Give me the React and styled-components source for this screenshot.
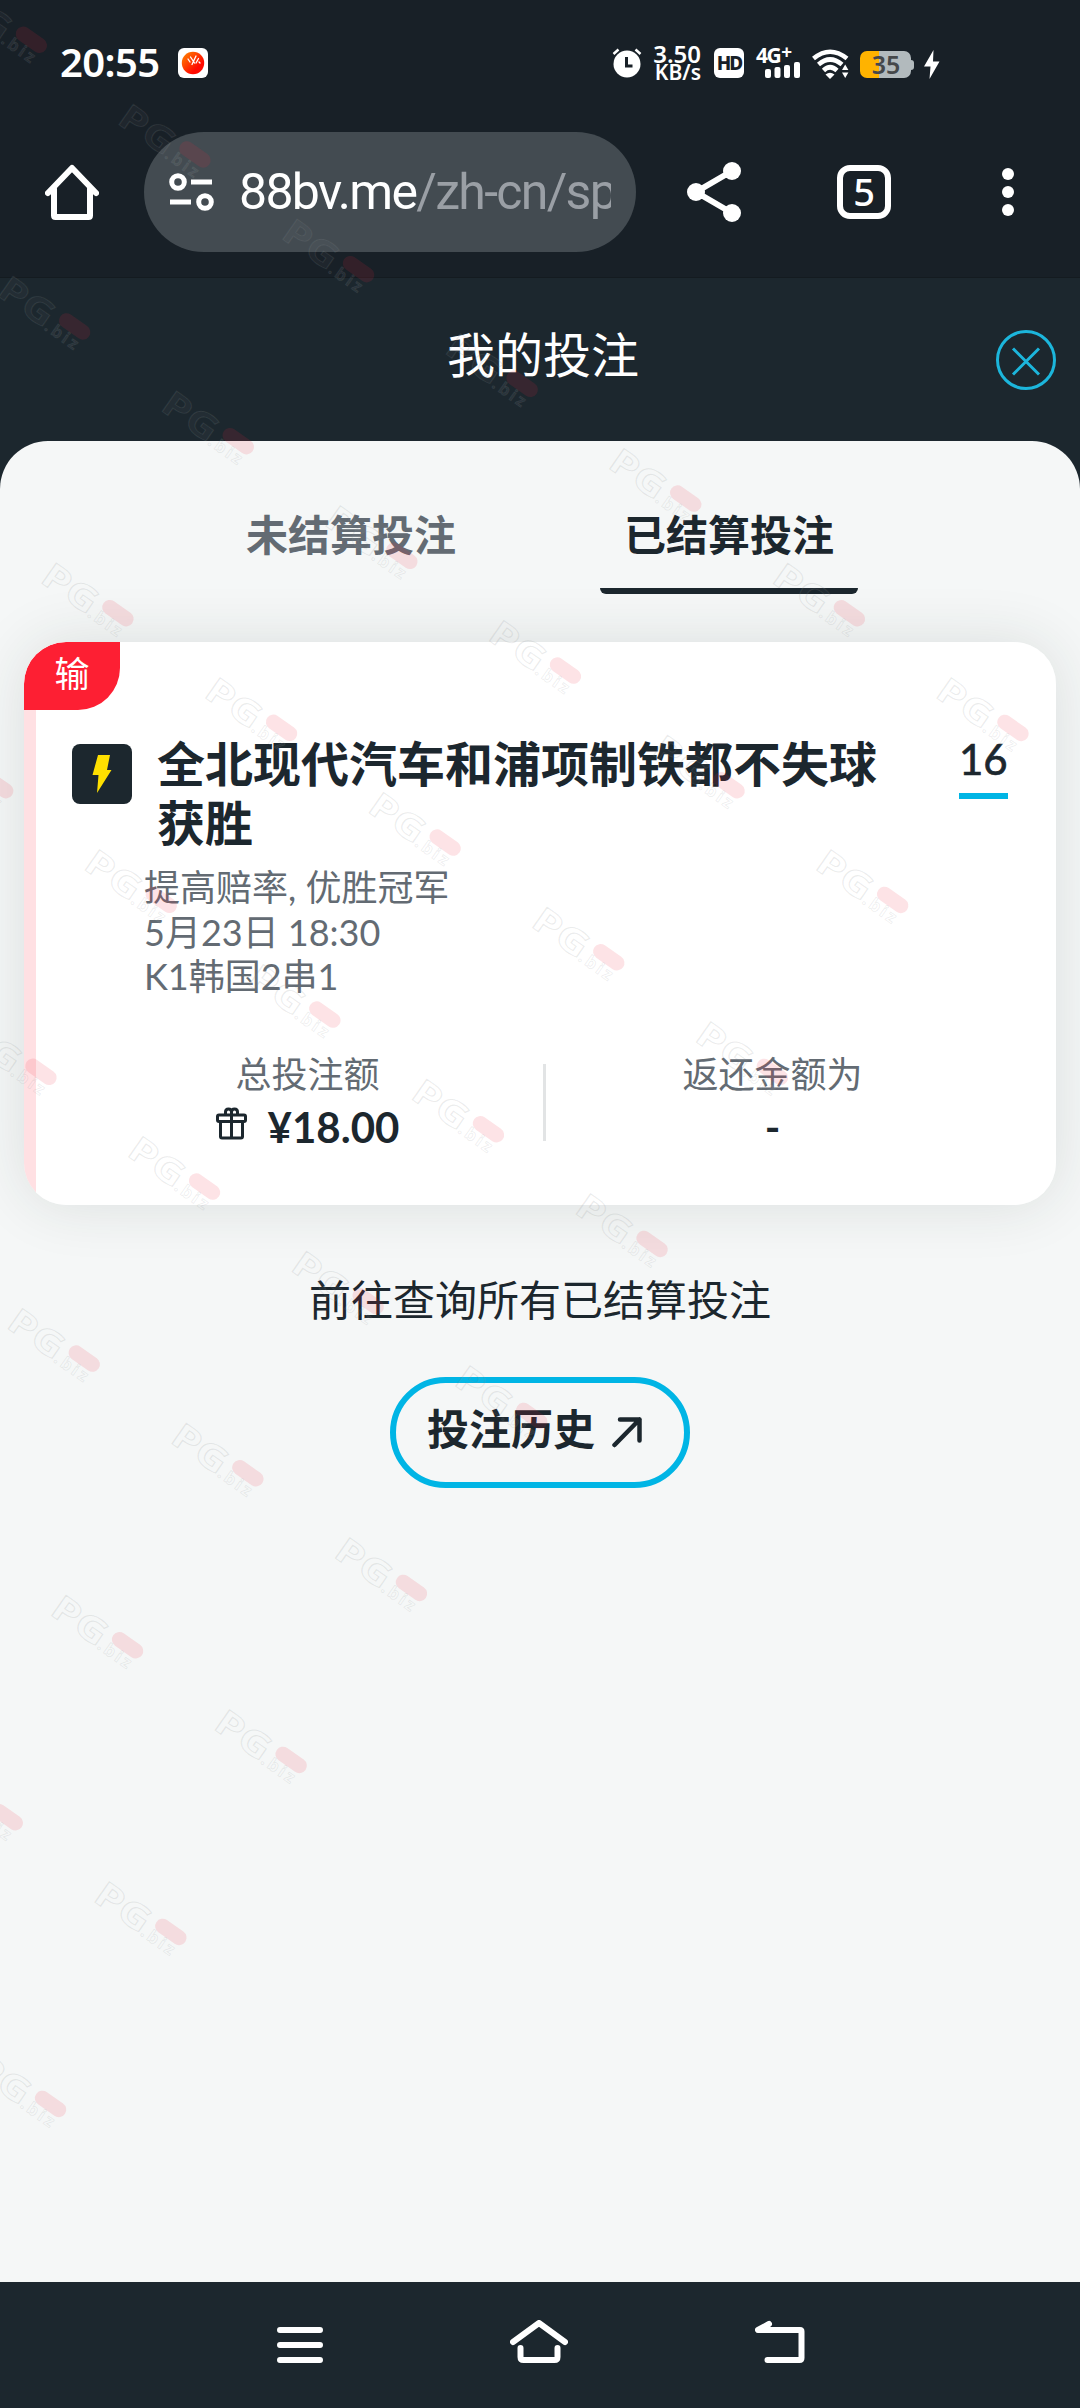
import styled, { createGlobalStyle } from "styled-components"

const tabs = [
    { label: "未结算投注", active: false },
    { label: "已结算投注", active: true },
]

const details = ["提高赔率, 优胜冠军", "5月23日 18:30", "K1韩国2串1"]

// rows of the watermark lattice: [row, first column, last column]
const markRows = [
    [0, -1, 5], [1, -1, 4], [2, -1, 3], [3, -2, 2], [4, -2, 1],
    [5, -2, 0], [6, -2, -1], [7, -3, -2], [8, -3, -3],
]
const marks = markRows.flatMap(([row, from, to]) =>
    Array.from({ length: to - from + 1 }, (_, k) => {
        const col = from + k
        return { x: 115.4 + col * 163.6 + row * 43.3, y: 104 + col * 114.7 + row * 286.7 }
    })
)

function Watermark() {
    return (
        <MarkLayer viewBox="0 0 1080 2408">
            {marks.map(({ x, y }) => (
                <g key={`${x}-${y}`} transform={`translate(${x} ${y}) rotate(35)`}>
                    <MarkLetters x="11" y="15" textLength="60" lengthAdjust="spacingAndGlyphs">PG</MarkLetters>
                    <rect x="76.600" y="-11.800" width="35" height="15" rx="7.500" fill="#f0283c" fillOpacity="0.13" />
                    <MarkSuffix x="70" y="16" textLength="37">.biz</MarkSuffix>
                </g>
            ))}
        </MarkLayer>
    )
}

export default function App() {
    return (
        <Page>
            <Global />
            <StatusBar>
                <Clock>20:55</Clock>
                <svg width="30" height="30" viewBox="0 0 30 30">
                    <defs>
                        <linearGradient id="app" x1="0" y1="0" x2="1" y2="1">
                            <stop offset="0" stopColor="#ff8a00" />
                            <stop offset="0.7" stopColor="#ff0a00" />
                        </linearGradient>
                    </defs>
                    <rect width="30" height="30" rx="6" fill="#fff" />
                    <circle cx="15" cy="15" r="11.2" fill="url(#app)" />
                    <path d="M10 11l2 3M12.500 9l4 6M18 8l-4 8.500M20.500 10.500l-2.500 4.500M21 14l1 1" stroke="#fff" strokeWidth="1.3" strokeLinecap="round" />
                </svg>
                <StatusIcons>
                    <svg width="30" height="30" viewBox="0 0 30 30">
                        <circle cx="15" cy="16" r="13.500" fill="#fff" />
                        <path d="M1.500 6l5-4.500M28.500 6l-5-4.500" stroke="#fff" strokeWidth="2.500" />
                        <path d="M14.500 9v9h6" stroke="#182027" strokeWidth="3" fill="none" />
                    </svg>
                    <Speed><span>3.50</span><small>KB/s</small></Speed>
                    <Hd>HD</Hd>
                    <Signal>
                        <b>4G<i>+</i></b>
                        <svg width="35" height="16" viewBox="0 0 35 16" fill="#fff">
                            <rect y="7" width="6" height="9" rx="2" />
                            <rect x="9.500" y="5" width="6" height="11" rx="2" />
                            <rect x="19" y="3" width="6" height="13" rx="2" />
                            <rect x="29" width="6" height="16" rx="2" />
                        </svg>
                    </Signal>
                    <svg width="37" height="30" viewBox="0 0 37 30" fill="none" stroke="#fff" strokeWidth="4.600">
                        <path d="M1.500 9.500Q18 -4 35 9.500" />
                        <path d="M6.500 15.500Q18 5.500 30 15.500" />
                        <path d="M11.500 21.500Q18 15 25 21.500" />
                        <path d="M13.500 25.500Q18 22 22.500 25.500L18 30z" fill="#fff" stroke="none" />
                        <path d="M30 21l3.200-5.500L36.400 21zM30 23.500l3.200 5.500 3.200-5.500z" fill="#fff" stroke="none" />
                    </svg>
                    <Battery><span>35</span></Battery>
                    <svg width="16" height="29" viewBox="0 0 16 29" fill="#fff">
                        <path d="M9.500 0L0 16.500h6.500L5.500 29 15.500 11.500H9z" />
                    </svg>
                </StatusIcons>
            </StatusBar>

            <BrowserBar>
                <svg width="54" height="56" viewBox="0 0 54 56" fill="none" stroke="#fff" strokeWidth="6" strokeLinecap="round" strokeLinejoin="round">
                    <path d="M3 29L27 4l24 25" />
                    <path d="M9 25v26.500q0 1.500 1.500 1.500h33q1.500 0 1.500-1.500V25" />
                </svg>
                <UrlPill>
                    <svg width="46" height="38" viewBox="0 0 46 38" fill="none" stroke="#fff" strokeWidth="5">
                        <circle cx="9" cy="9" r="6.300" />
                        <circle cx="36" cy="29" r="6.300" />
                        <path d="M22 9h21M1 29h21" />
                    </svg>
                    <Url>88bv.me<span>/zh-cn/sp</span></Url>
                </UrlPill>
                <Tools>
                    <svg width="54" height="60" viewBox="0 0 54 60" fill="#fff">
                        <path d="M45 9L9 30l36 21" stroke="#fff" strokeWidth="6" fill="none" />
                        <circle cx="45" cy="9" r="9" />
                        <circle cx="9" cy="30" r="9" />
                        <circle cx="45" cy="51" r="9" />
                    </svg>
                    <TabCount>5</TabCount>
                    <svg width="12" height="48" viewBox="0 0 12 48" fill="#fff">
                        <circle cx="6" cy="6" r="6" />
                        <circle cx="6" cy="24" r="6" />
                        <circle cx="6" cy="42" r="6" />
                    </svg>
                </Tools>
            </BrowserBar>

            <Header>
                <h1>我的投注</h1>
                <svg width="60" height="60" viewBox="0 0 60 60" fill="none" stroke="#1cb6dc" strokeWidth="3">
                    <circle cx="30" cy="30" r="28.500" />
                    <path d="M17 18.500l26 26M43 18.500l-26 26" />
                </svg>
            </Header>

            <Sheet>
                <Tabs>
                    {tabs.map(tab => <Tab key={tab.label} $active={tab.active}>{tab.label}</Tab>)}
                </Tabs>

                <Card>
                    <Result>输</Result>
                    <Bet>
                        <BoltBox>
                            <svg width="20" height="40" viewBox="0 0 20 40">
                                <path d="M6 1h12l-3 15h4.500L5 39l1.500-18H.500z" fill="#ffe000" />
                            </svg>
                        </BoltBox>
                        <BetTitle>全北现代汽车和浦项制铁都不失球获胜</BetTitle>
                        <Odds>16</Odds>
                    </Bet>
                    <Details>
                        {details.map(line => <p key={line}>{line}</p>)}
                    </Details>
                    <Amounts>
                        <Amount $width="471px">
                            <span>总投注额</span>
                            <strong>
                                <svg width="32" height="33" viewBox="0 0 32 33" fill="none" stroke="#1c272e" strokeWidth="3">
                                    <rect x="1.500" y="8" width="28" height="6.500" rx="1.500" />
                                    <path d="M4.500 14.500v15q0 1.500 1.500 1.500h19q1.500 0 1.500-1.500v-15M15.500 7v24" />
                                    <path d="M15.500 8V5Q15.500 2 12.500 2T9.500 5v3M15.500 8V5q0-3 3-3t3 3v3" />
                                </svg>
                                ¥18.00
                            </strong>
                        </Amount>
                        <Divider />
                        <Amount $width="453px">
                            <span>返还金额为</span>
                            <strong>-</strong>
                        </Amount>
                    </Amounts>
                </Card>

                <Hint>前往查询所有已结算投注</Hint>
                <HistoryButton>
                    投注历史
                    <svg width="31" height="32" viewBox="0 0 31 32" fill="none" stroke="#1c272e" strokeWidth="4.500" strokeLinecap="round" strokeLinejoin="round">
                        <path d="M2.500 29L27.500 3.500M8 3.500h19.500v21" />
                    </svg>
                </HistoryButton>
            </Sheet>

            <NavBar>
                <svg width="46" height="44" viewBox="0 0 46 44">
                    <path d="M3 10h40M3 25h40M3 40h40" />
                </svg>
                <svg width="58" height="44" viewBox="0 0 58 44">
                    <path d="M3 22L29 3l26 19M10.500 28v9q0 3 3 3h31q3 0 3-3v-9" />
                </svg>
                <svg width="50" height="44" viewBox="0 0 50 44">
                    <path d="M14 4L3 10h42q1.500 0 1.500 1.500v26.500q0 2-2 2H12.500" />
                </svg>
            </NavBar>
            <Watermark />
        </Page>
    )
}

const Global = createGlobalStyle`
    * { box-sizing: border-box; }
    body, h1, h2, p { margin: 0; }
    svg { display: block; flex: none; }
`;

const Page = styled.div`
    position: relative;
    display: flex;
    flex-direction: column;
    width: 1080px;
    height: 2408px;
    overflow: hidden;
    background: #1c272e;
    color: #1c272e;
    font-family: Lato, "Noto Sans CJK SC", sans-serif;
`;

const StatusBar = styled.div`
    display: flex;
    align-items: center;
    height: 126px;
    padding-left: 60px;
    background: #182027;
    color: #fff;
    font-family: "Noto Sans", sans-serif;
`;

const Clock = styled.div`
    width: 118px;
    font-size: 40px;
    font-weight: 600;
    letter-spacing: -0.6px;
    line-height: 48px;
    padding-bottom: 2px;
`;

const StatusIcons = styled.div`
    display: flex;
    align-items: center;
    margin-left: 404px;

    > :nth-child(2) { margin-left: 11px; }
    > :nth-child(3) { margin-left: 13px; }
    > :nth-child(4) { margin-left: 12px; }
    > :nth-child(5) { margin: 2px 0 0 12px; }
    > :nth-child(6) { margin: 3px 0 0 11px; }
    > :nth-child(7) { margin: 2px 0 0 10px; }
`;

const Speed = styled.div`
    display: flex;
    flex-direction: column;
    align-items: flex-end;
    width: 48px;
    font-size: 24px;
    font-weight: 600;
    line-height: 19px;
    white-space: nowrap;

    small { font-size: 21px; }
`;

const Hd = styled.div`
    width: 30px;
    height: 30px;
    border-radius: 6px;
    background: #fff;
    color: #182027;
    font-size: 19px;
    font-weight: 800;
    letter-spacing: -2px;
    line-height: 30px;
    text-align: center;
`;

const Signal = styled.div`
    display: flex;
    flex-direction: column;
    align-items: flex-end;
    width: 44px;
    height: 30px;

    b {
        display: flex;
        width: 44px;
        height: 14px;
        font-size: 21px;
        letter-spacing: -1.5px;
        line-height: 15px;
        white-space: nowrap;
    }

    i {
        font-size: 19px;
        font-style: normal;
        line-height: 8px;
        margin-left: 1px;
    }
`;

const Battery = styled.div`
    display: flex;
    align-items: center;
    width: 54px;
    color: #45484a;
    font-size: 25px;
    font-weight: 600;
    line-height: 27px;

    span {
        width: 51px;
        height: 27px;
        padding-left: 1px;
        border-radius: 7px;
        background: linear-gradient(90deg, #ffb300 19px, #b2babd 19px);
        text-align: center;
    }

    &::after {
        content: "";
        width: 3px;
        height: 10px;
        border-radius: 0 3px 3px 0;
        background: #b2babd;
    }
`;

const BrowserBar = styled.div`
    display: flex;
    align-items: center;
    height: 152px;
    padding: 0 66px 20px 45px;
    background: #182027;
    border-bottom: 1px solid #141b20;
    color: #fff;
`;

const UrlPill = styled.div`
    display: flex;
    align-items: center;
    width: 492px;
    height: 120px;
    margin-left: 45px;
    padding-left: 25px;
    border-radius: 60px;
    background: #434b51;
`;

const Url = styled.div`
    width: 372px;
    margin-left: 24px;
    overflow: hidden;
    font-family: Roboto, sans-serif;
    font-size: 50px;
    letter-spacing: -1.7px;
    line-height: 64px;
    white-space: nowrap;

    span { color: #9a9fa5; }
`;

const Tools = styled.div`
    display: flex;
    align-items: center;
    margin-left: 51px;

    > :nth-child(2) { margin: 0 111px 0 96px; }
`;

const TabCount = styled.div`
    width: 54px;
    height: 54px;
    border: 6px solid #fff;
    border-radius: 13px;
    font-family: "Noto Sans", sans-serif;
    font-size: 38px;
    font-weight: 500;
    line-height: 41px;
    text-align: center;
`;

const Header = styled.div`
    display: flex;
    align-items: center;
    justify-content: flex-end;
    height: 163px;
    padding-right: 24px;
    color: #fff;

    h1 {
        width: 906px;
        padding-bottom: 9px;
        text-align: center;
        font-size: 48px;
        font-weight: 400;
        line-height: 60px;
    }
`;

const Sheet = styled.div`
    display: flex;
    flex: 1;
    flex-direction: column;
    align-items: center;
    border-radius: 48px 48px 0 0;
    background: #f5f7f7;
`;

const Tabs = styled.div`
    display: flex;
    gap: 120px;
    padding-top: 47px;
`;

const Tab = styled.div`
    width: 258px;
    height: 106px;
    padding-top: 17px;
    overflow: hidden;
    color: ${props => props.$active ? "#1c272e" : "#636b73"};
    font-size: 42px;
    font-weight: 700;
    line-height: 60px;
    text-align: center;

    &::after {
        content: "";
        display: block;
        height: 6px;
        margin-top: 23px;
        border-radius: 0 0 6px 6px;
        background: ${props => props.$active ? "#1c272e" : "transparent"};
    }
`;

const Card = styled.div`
    width: 1032px;
    height: 563px;
    margin-top: 48px;
    overflow: hidden;
    border-radius: 42px;
    background: linear-gradient(90deg, #ffe0e3 12px, #fff 12px);
    box-shadow: 0 0 60px rgba(30, 50, 45, 0.12);
`;

const Result = styled.div`
    width: 96px;
    height: 68px;
    border-radius: 42px 0 42px 0;
    background: #fd1f33;
    color: #fff;
    font-size: 35px;
    line-height: 63px;
    text-align: center;
`;

const Bet = styled.div`
    display: flex;
    align-items: flex-start;
    padding: 24px 48px 0;
`;

const BoltBox = styled.div`
    display: flex;
    align-items: center;
    justify-content: center;
    width: 60px;
    height: 60px;
    margin-top: 10px;
    border-radius: 8px;
    background: #1c272e;
`;

const BetTitle = styled.h2`
    width: 740px;
    margin-left: 25px;
    font-size: 48px;
    font-weight: 700;
    line-height: 59px;
`;

const Odds = styled.div`
    width: 49px;
    margin-left: auto;
    border-bottom: 6px solid #00b5e5;
    font-size: 42px;
    line-height: 50px;
    padding-bottom: 9px;
    -webkit-text-stroke: 0.7px #1c272e;
`;

const Details = styled.div`
    padding: 13px 0 0 120px;
    color: #636b73;
    font-size: 36px;
    line-height: 44.5px;
`;

const Amounts = styled.div`
    display: flex;
    align-items: center;
    margin: 50px 0 0 48px;
`;

const Amount = styled.div`
    display: flex;
    flex-direction: column;
    align-items: center;
    width: ${props => props.$width};

    span {
        color: #636b73;
        font-size: 36px;
        line-height: 50px;
    }

    strong {
        display: flex;
        align-items: center;
        gap: 20px;
        height: 56px;
        font-size: 42px;
        line-height: 54px;
    }

    svg { margin-bottom: 6px; }
`;

const Divider = styled.div`
    width: 3px;
    height: 77px;
    margin-top: 2px;
    background: #e2e4e5;
`;

const Hint = styled.p`
    margin-top: 65px;
    font-size: 42px;
    line-height: 60px;
`;

const HistoryButton = styled.button`
    display: flex;
    align-items: center;
    justify-content: center;
    gap: 17px;
    width: 300px;
    height: 111px;
    margin-top: 47px;
    padding: 0 10px 7px 0;
    border: 6px solid #00b5e5;
    border-radius: 56px;
    background: transparent;
    color: #1c272e;
    font: 700 42px/60px Lato, "Noto Sans CJK SC", sans-serif;

    svg { margin-top: 6px; }
`;

const NavBar = styled.div`
    display: flex;
    align-items: flex-start;
    justify-content: space-between;
    height: 126px;
    padding: 38px 275px 0 277px;
    background: #1c272e;

    path {
        fill: none;
        stroke: #fff;
        stroke-width: 6;
        stroke-linecap: round;
        stroke-linejoin: round;
    }
`;

// sits over the whole page
const MarkLayer = styled.svg`
    position: absolute;
    inset: 0;
    width: 1080px;
    height: 2408px;
    pointer-events: none;
`;

const MarkLetters = styled.text`
    font: 700 35px "Open Sans", sans-serif;
    fill: rgba(255, 255, 255, 0.05);
    stroke: rgba(130, 135, 138, 0.17);
    stroke-width: 1px;
`;

const MarkSuffix = styled.text`
    font: 700 17px "Open Sans", sans-serif;
    fill: rgba(255, 255, 255, 0.08);
    stroke: rgba(130, 135, 138, 0.15);
    stroke-width: 0.8px;
`;
